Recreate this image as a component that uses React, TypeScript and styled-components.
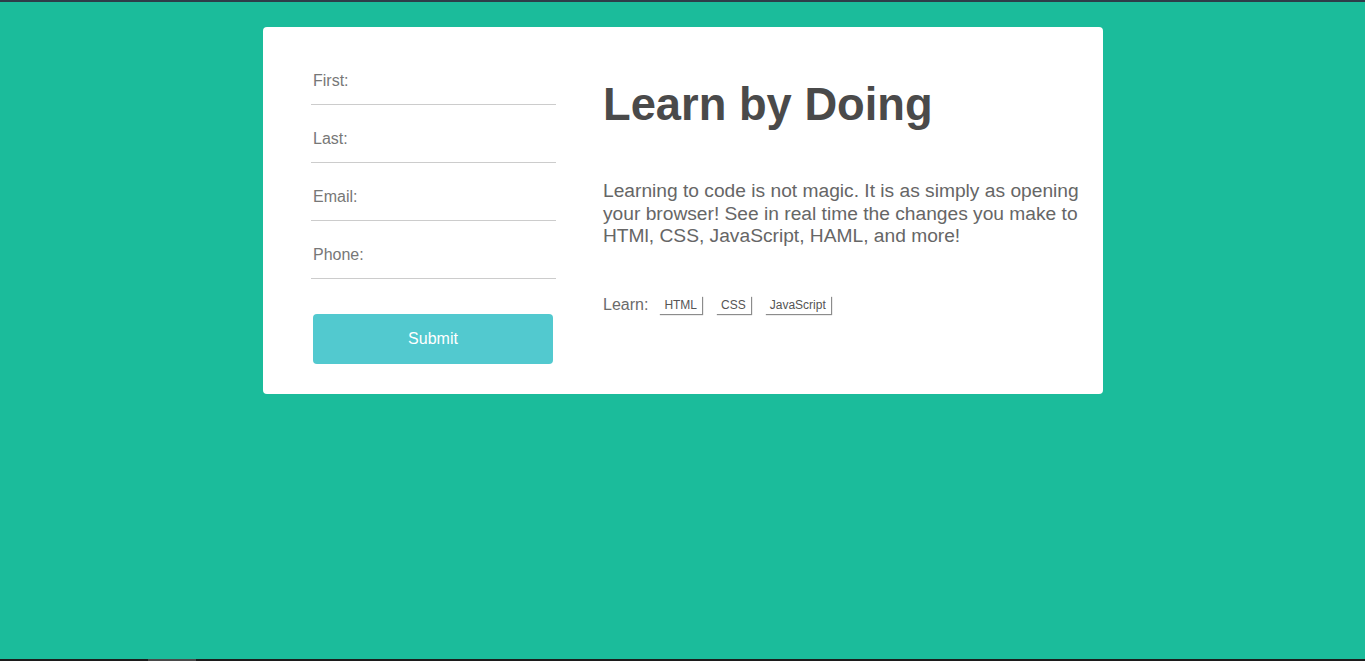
import React from "react";
import styled, { createGlobalStyle } from "styled-components";

const Global = createGlobalStyle`
  html, body { margin: 0; padding: 0; }
  body {
    background: #1bbc9b;
    font-family: "Liberation Sans", Arial, sans-serif;
  }
  * { box-sizing: border-box; }
`;

const Page = styled.div`
  height: 100vh;
  display: flex;
  flex-direction: column;
  border-top: 2px solid #2e3d49;
`;

const Main = styled.main`
  flex: 1;
  display: flex;
  justify-content: center;
  align-items: flex-start;
  padding-top: 25px;
  padding-left: 1px;
`;

const BottomStrip = styled.div`
  height: 2px;
  background: #1c1c1c;
  display: flex;
  padding-left: 148px;
`;

const StripThumb = styled.div`
  width: 48px;
  background: #4a4a4a;
`;

const Card = styled.section`
  width: 840px;
  background: #ffffff;
  border-radius: 4px;
  display: flex;
  padding: 20px 20px 30px 48px;
  gap: 47px;
`;

const Form = styled.form`
  width: 245px;
  flex-shrink: 0;
  display: flex;
  flex-direction: column;
`;

const Field = styled.label`
  height: 58px;
  display: flex;
  align-items: flex-end;
  padding: 0 0 14px 2px;
  border-bottom: 1px solid #cccccc;
  font-size: 16px;
  line-height: 18px;
  color: #777777;
`;

const Submit = styled.button`
  margin: 35px 0 0 2px;
  width: 240px;
  height: 50px;
  border: none;
  border-radius: 4px;
  background: #52c9cf;
  color: #ffffff;
  font-family: "Liberation Sans", Arial, sans-serif;
  font-size: 16px;
  cursor: pointer;
`;

const Info = styled.div`
  width: 480px;
  flex-shrink: 0;
  display: flex;
  flex-direction: column;
  padding-top: 32px;
`;

const Title = styled.h1`
  margin: 0;
  font-size: 45.3px;
  line-height: 52px;
  font-weight: 700;
  color: #4a4a4a;
`;

const Lead = styled.p`
  margin: 49px 0 0;
  font-size: 19.2px;
  line-height: 22.5px;
  color: #666666;
`;

const LearnRow = styled.div`
  margin-top: 48px;
  display: flex;
  align-items: center;
  font-size: 16px;
  line-height: 18px;
  color: #6b6b6b;
`;

const LearnLabel = styled.span`
  margin-right: 11px;
`;

const Tag = styled.button`
  height: 18px;
  padding: 0 5px;
  margin-right: 14px;
  border: none;
  background: #ffffff;
  box-shadow: 1px 1px 1px rgba(0, 0, 0, 0.45);
  font-family: "Liberation Sans", Arial, sans-serif;
  font-size: 12px;
  line-height: 18px;
  color: #555555;
  cursor: pointer;
`;

const fields = ["First:", "Last:", "Email:", "Phone:"];
const tags = ["HTML", "CSS", "JavaScript"];

export default function App() {
  return (
    <>
      <Global />
      <Page>
        <Main>
          <Card>
            <Form onSubmit={(e) => e.preventDefault()}>
              {fields.map((f) => (
                <Field key={f}>{f}</Field>
              ))}
              <Submit type="submit">Submit</Submit>
            </Form>
            <Info>
              <Title>Learn by Doing</Title>
              <Lead>
                Learning to code is not magic. It is as simply as opening your
                browser! See in real time the changes you make to HTMl, CSS,
                JavaScript, HAML, and more!
              </Lead>
              <LearnRow>
                <LearnLabel>Learn:</LearnLabel>
                {tags.map((t) => (
                  <Tag key={t} type="button">
                    {t}
                  </Tag>
                ))}
              </LearnRow>
            </Info>
          </Card>
        </Main>
        <BottomStrip>
          <StripThumb />
        </BottomStrip>
      </Page>
    </>
  );
}
